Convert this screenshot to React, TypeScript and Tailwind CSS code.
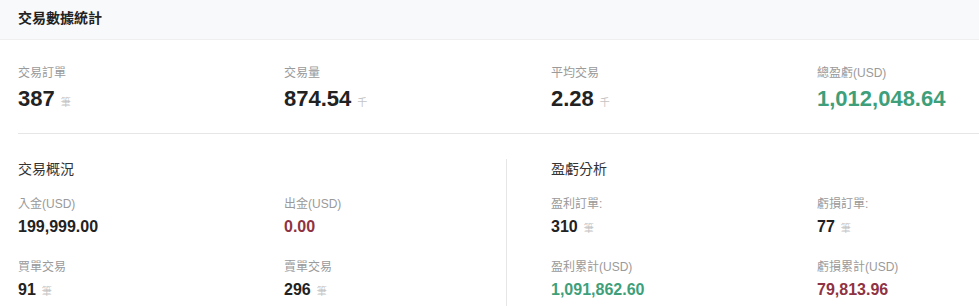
import React from "react";

const font = { fontFamily: '"Liberation Sans", "Noto Sans CJK TC", sans-serif' };

function Unit({ children }: { children: React.ReactNode }) {
  return <span className="ml-[6px] text-[10px] leading-none font-normal text-[#c4c4c4]">{children}</span>;
}

function TopStat({ label, value, unit, color }: { label: string; value: string; unit?: string; color?: string }) {
  return (
    <div className="flex flex-col gap-[4px]">
      <div className="text-[12px] leading-[16px] text-[#9a9a9a]">{label}</div>
      <div className={`text-[22px] leading-[28px] h-[28px] font-bold ${color ?? "text-[#222]"}`}>
        {value}
        {unit && <Unit>{unit}</Unit>}
      </div>
    </div>
  );
}

function SmallStat({ label, value, unit, color }: { label: string; value: string; unit?: string; color?: string }) {
  return (
    <div className="flex flex-col gap-[4px]">
      <div className="text-[12px] leading-[16px] text-[#9a9a9a]">{label}</div>
      <div className={`text-[16px] leading-[22px] h-[22px] font-bold ${color ?? "text-[#222]"}`}>
        {value}
        {unit && <Unit>{unit}</Unit>}
      </div>
    </div>
  );
}

export default function App() {
  return (
    <div className="w-[979px] h-[306px] overflow-hidden bg-white" style={font}>
      <div className="h-[40px] bg-[#f8f9fb] border-b border-[#efefef] flex items-center px-[18px] pb-[4px]">
        <span className="text-[14px] leading-[16px] font-bold text-[#222]">交易數據統計</span>
      </div>
      <div className="pl-[18px]">
        <div className="grid grid-cols-[266px_267px_266px_266px] pt-[25px] pb-[20px] border-b border-[#e6e6e6]">
          <TopStat label="交易訂單" value="387" unit="筆" />
          <TopStat label="交易量" value="874.54" unit="千" />
          <TopStat label="平均交易" value="2.28" unit="千" />
          <TopStat label="總盈虧(USD)" value="1,012,048.64" color="text-[#3e9f7a]" />
        </div>
        <div className="flex mt-[25px]">
          <div className="w-[488px] flex flex-col">
            <div className="text-[14px] leading-[20px] text-[#333]">交易概況</div>
            <div className="grid grid-cols-[266px_222px] gap-y-[21px] mt-[17px]">
              <SmallStat label="入金(USD)" value="199,999.00" />
              <SmallStat label="出金(USD)" value="0.00" color="text-[#8f3342]" />
              <SmallStat label="買單交易" value="91" unit="筆" />
              <SmallStat label="賣單交易" value="296" unit="筆" />
            </div>
          </div>
          <div className="flex-1 border-l border-[#e6e6e6] pl-[44px] flex flex-col h-[150px]">
            <div className="text-[14px] leading-[20px] text-[#333]">盈虧分析</div>
            <div className="grid grid-cols-[266px_200px] gap-y-[21px] mt-[17px]">
              <SmallStat label="盈利訂單:" value="310" unit="筆" />
              <SmallStat label="虧損訂單:" value="77" unit="筆" />
              <SmallStat label="盈利累計(USD)" value="1,091,862.60" color="text-[#3e9f7a]" />
              <SmallStat label="虧損累計(USD)" value="79,813.96" color="text-[#8f3342]" />
            </div>
          </div>
        </div>
      </div>
    </div>
  );
}
